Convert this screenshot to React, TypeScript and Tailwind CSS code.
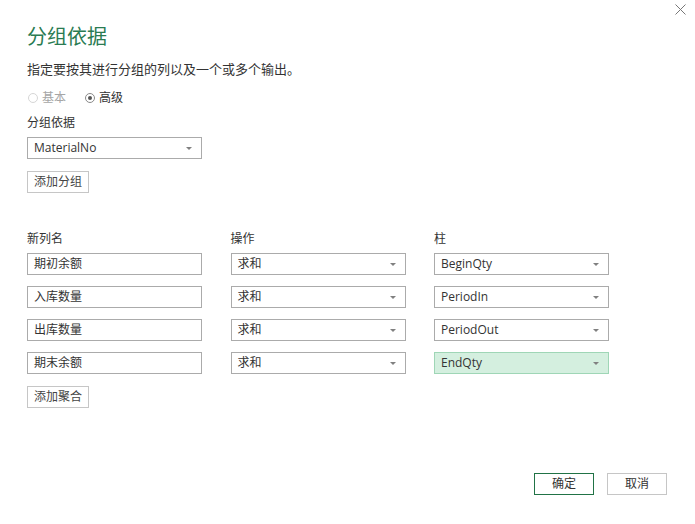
import React from "react";

const Arrow = () => (
  <svg width="6" height="3" viewBox="0 0 6 3" className="shrink-0">
    <path d="M0 0 H6 L3 3 Z" fill="#808080" />
  </svg>
);

function Select({ value, highlight }: { value: string; highlight?: boolean }) {
  return (
    <div
      className={
        highlight
          ? "flex h-[22px] w-[175px] items-center justify-between border border-[#9fd6b6] bg-[#d4efdf] pl-[6px] pr-[9px] text-[12px] leading-none text-[#333]"
          : "flex h-[22px] w-[175px] items-center justify-between border border-[#ababab] bg-white pl-[6px] pr-[9px] text-[12px] leading-none text-[#333]"
      }
    >
      <span>{value}</span>
      <Arrow />
    </div>
  );
}

function TextBox({ value }: { value: string }) {
  return (
    <div className="flex h-[22px] w-[175px] items-center border border-[#ababab] bg-white pl-[6px] text-[12px] leading-none text-[#333]">
      {value}
    </div>
  );
}

function Btn({ label }: { label: string }) {
  return (
    <div className="flex h-[22px] w-[62px] items-center justify-center border border-[#c6c6c6] bg-white text-[12px] leading-none text-[#444]">
      {label}
    </div>
  );
}

export default function App() {
  const rows = [
    ["期初余额", "求和", "BeginQty"],
    ["入库数量", "求和", "PeriodIn"],
    ["出库数量", "求和", "PeriodOut"],
    ["期末余额", "求和", "EndQty"],
  ];
  return (
    <div className="relative h-[524px] w-[695px] overflow-hidden bg-white px-[27px] font-['Open_Sans','Noto_Sans_CJK_SC',sans-serif] text-[#333]">
      <div className="absolute right-[9px] top-[4px]">
        <svg width="11" height="11" viewBox="0 0 11 11">
          <path d="M0.5 0.5 L10.5 10.5 M10.5 0.5 L0.5 10.5" stroke="#777" strokeWidth="1" />
        </svg>
      </div>

      <div className="mt-[25px] text-[20px] leading-[24px] text-[#2a7b52]">分组依据</div>
      <div className="mt-[11px] text-[13px] leading-[18px] text-[#333]">
        指定要按其进行分组的列以及一个或多个输出。
      </div>

      <div className="mt-[12px] flex h-[16px] items-center text-[12px] leading-[16px]">
        <div className="flex items-center gap-[4px] text-[#a6a6a6]">
          <span className="ml-px h-[10px] w-[10px] rounded-full border border-[#d6d6d6] bg-white" />
          <span>基本</span>
        </div>
        <div className="ml-[19px] flex items-center gap-[4px] text-[#333]">
          <span className="flex h-[10px] w-[10px] items-center justify-center rounded-full border border-[#8a8a8a] bg-white">
            <span className="h-[4px] w-[4px] rounded-full bg-[#555]" />
          </span>
          <span>高级</span>
        </div>
      </div>

      <div className="mt-[9px] text-[12px] leading-[16px]">分组依据</div>
      <div className="mt-[6px]">
        <Select value="MaterialNo" />
      </div>
      <div className="mt-[12px]">
        <Btn label="添加分组" />
      </div>

      <div className="mt-[38px] grid grid-cols-[175px_175px_175px] gap-x-[28.5px] text-[12px] leading-[16px]">
        <div>新列名</div>
        <div>操作</div>
        <div>柱</div>
      </div>
      <div className="mt-[6px] flex flex-col gap-[11px]">
        {rows.map((r, i) => (
          <div key={i} className="grid grid-cols-[175px_175px_175px] gap-x-[28.5px]">
            <TextBox value={r[0]} />
            <Select value={r[1]} />
            <Select value={r[2]} highlight={i === 3} />
          </div>
        ))}
      </div>
      <div className="mt-[12px]">
        <Btn label="添加聚合" />
      </div>

      <div className="mt-[65px] flex justify-end gap-[13px] pr-px">
        <div className="flex h-[22px] w-[60px] items-center justify-center border border-[#217346] bg-white text-[12px] leading-none text-[#333]">
          确定
        </div>
        <div className="flex h-[22px] w-[60px] items-center justify-center border border-[#c6c6c6] bg-white text-[12px] leading-none text-[#333]">
          取消
        </div>
      </div>
    </div>
  );
}
